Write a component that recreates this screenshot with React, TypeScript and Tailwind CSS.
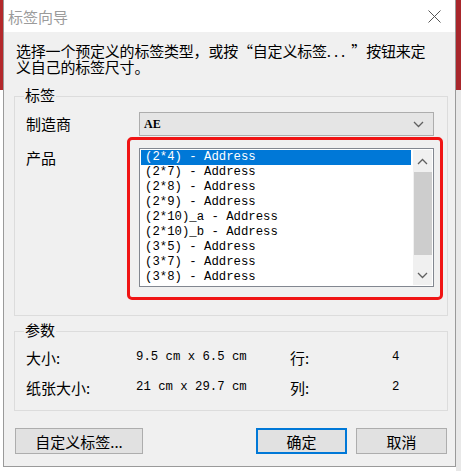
const items = [
  "(2*4) - Address",
  "(2*7) - Address",
  "(2*8) - Address",
  "(2*9) - Address",
  "(2*10)_a - Address",
  "(2*10)_b - Address",
  "(3*5) - Address",
  "(3*7) - Address",
  "(3*8) - Address",
];

const Chevron = ({ up = false }: { up?: boolean }) => (
  <svg width="11" height="7" viewBox="0 0 11 7" className="block">
    <path
      d={up ? "M1 6 L5.5 1.5 L10 6" : "M1 1 L5.5 5.5 L10 1"}
      fill="none"
      stroke="#606060"
      strokeWidth="1.3"
    />
  </svg>
);

const App = () => {
  return (
    <div className="w-[461px] h-[471px] flex bg-white overflow-hidden font-['Noto_Sans_CJK_SC',sans-serif] text-black">
      {/* window behind, left edge */}
      <div className="w-[3px] flex flex-col">
        <div className="h-[90px] bg-[#b3282b]"></div>
        <div className="flex-1 bg-white"></div>
      </div>

      {/* dialog */}
      <div className="w-[453px] h-[467px] flex flex-col border-l border-r border-b border-[#9a9a9a] bg-[#f0f0f0]">
        <div className="h-[32px] bg-white flex items-center justify-between pl-[4px] pr-[14px]">
          <span className="text-[15px] leading-[17px] text-[#9b9b9b]">标签向导</span>
          <svg width="13" height="13" viewBox="0 0 13 13">
            <path d="M0.5 0.5 L12.5 12.5 M12.5 0.5 L0.5 12.5" stroke="#555" strokeWidth="1" />
          </svg>
        </div>

        <div className="flex flex-col pl-[10px] pr-[7px]">
          <p className="pt-[11px] pl-[2px] text-[15px] leading-[16px] tracking-[-0.2px] whitespace-pre">
            选择一个预定义的标签类型，或按“自定义标签. . .  ”按钮来定
            <br />
            义自己的标签尺寸。
          </p>

          {/* 标签 group */}
          <div className="relative mt-[21px] h-[220px] border border-[#dcdcdc] flex flex-col">
            <span className="-mt-[11px] ml-[9px] w-fit px-[1px] bg-[#f0f0f0] text-[15px] leading-[17px]">标签</span>
            <div className="mt-[9px] pl-[11px] grid grid-cols-[113px_295px] gap-y-[12px] items-start">
              <span className="text-[15px] leading-[24px]">制造商</span>
              <div className="h-[24px] bg-[#e5e5e5] border border-[#adadad] flex items-center justify-between pl-[4px] pr-[9px]">
                <span className="font-['Liberation_Serif',serif] font-bold text-[12px] leading-[14px]">AE</span>
                <Chevron />
              </div>

              <span className="pt-[1px] text-[15px] leading-[17px]">产品</span>
              <div className="h-[139px] border border-[#828790] bg-white p-[1px] flex">
                <div className="flex-1 flex flex-col font-['Liberation_Mono',monospace] text-[12.3px] leading-[15px]">
                  {items.map((it, i) => (
                    <div
                      key={it}
                      className={
                        i === 0
                          ? "h-[15px] pl-[4px] bg-[#0078d7] text-white mr-[2px] whitespace-pre"
                          : "h-[15px] pl-[4px] whitespace-pre"
                      }
                    >
                      {it}
                    </div>
                  ))}
                </div>
                <div className="w-[19px] bg-[#f0f0f0] flex flex-col items-center">
                  <div className="h-[22px] flex items-center justify-center">
                    <Chevron up />
                  </div>
                  <div className="w-[18px] h-[83px] bg-[#cdcdcd]"></div>
                  <div className="flex-1"></div>
                  <div className="h-[20px] flex items-center justify-center">
                    <Chevron />
                  </div>
                </div>
              </div>
            </div>

            {/* red highlight annotation */}
            <div className="absolute left-[112px] top-[40px] w-[316px] h-[163px] border-[3px] border-[#f01414] rounded-[5px]"></div>
          </div>

          {/* 参数 group */}
          <div className="mt-[15px] h-[80px] border border-[#dcdcdc] flex flex-col">
            <span className="-mt-[11px] ml-[9px] w-fit px-[1px] bg-[#f0f0f0] text-[15px] leading-[17px]">参数</span>
            <div className="mt-[11px] pl-[11px] grid grid-cols-[110px_154px_102px_auto] gap-y-[13px] text-[15px] leading-[17px]">
              <span>大小:</span>
              <span className="font-['Liberation_Mono',monospace] text-[12.3px] whitespace-pre">9.5 cm x 6.5 cm</span>
              <span>行:</span>
              <span className="font-['Liberation_Mono',monospace] text-[12.3px]">4</span>
              <span>纸张大小:</span>
              <span className="font-['Liberation_Mono',monospace] text-[12.3px] whitespace-pre">21 cm x 29.7 cm</span>
              <span>列:</span>
              <span className="font-['Liberation_Mono',monospace] text-[12.3px]">2</span>
            </div>
          </div>

          {/* buttons */}
          <div className="mt-[17px] flex items-center pl-[1px]">
            <button className="w-[128px] h-[26px] bg-[#e1e1e1] border border-[#adadad] text-[15px] leading-[17px]">
              自定义标签...
            </button>
            <div className="flex-1"></div>
            <button className="w-[91px] h-[26px] bg-[#e1e1e1] border-2 border-[#0078d7] text-[15px] leading-[17px]">
              确定
            </button>
            <button className="ml-[9px] mr-[1px] w-[91px] h-[26px] bg-[#e1e1e1] border border-[#adadad] text-[15px] leading-[17px]">
              取消
            </button>
          </div>
        </div>
      </div>

      {/* window behind, right edge */}
      <div className="flex-1 flex flex-col">
        <div className="h-[90px] bg-[#a8262b]"></div>
        <div className="flex-1 bg-[#e8e8e8]"></div>
      </div>
    </div>
  );
};

export default App;
